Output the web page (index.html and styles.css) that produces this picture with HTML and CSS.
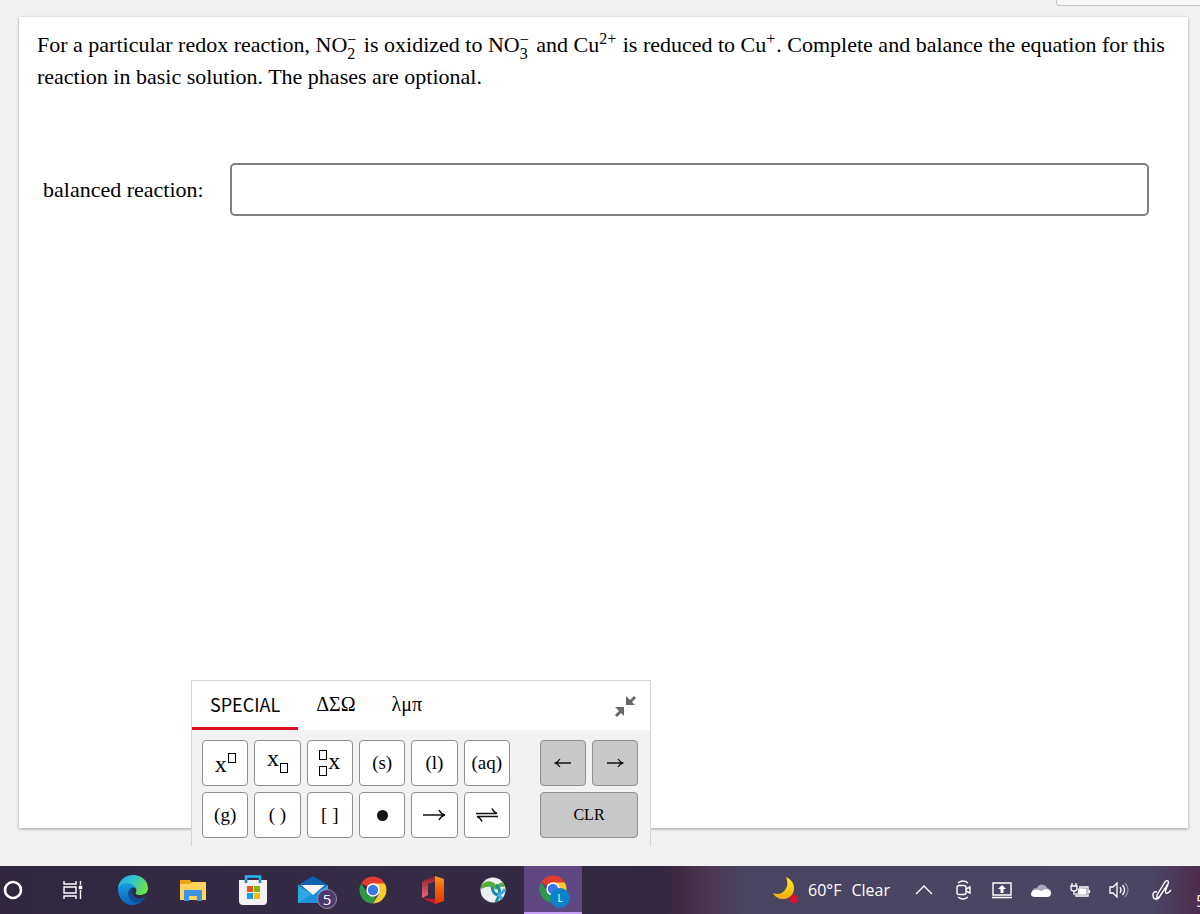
FILE: index.html
```html
<!DOCTYPE html>
<html lang="en">
<head>
<meta charset="utf-8">
<title>Balanced reaction</title>
<meta name="viewport" content="width=device-width, initial-scale=1">
<link rel="stylesheet" href="styles.css">
</head>
<body>
<header class="topbar"><div class="topbar-panel"></div></header>

<main class="card">
  <p class="question">For a particular redox reaction, <span class="ion">NO<span class="stack"><sup>−</sup><sub>2</sub></span></span> is oxidized to <span class="ion">NO<span class="stack"><sup>−</sup><sub>3</sub></span></span> and <span class="ion">Cu<sup class="charge">2+</sup></span> is reduced to <span class="ion">Cu<sup class="charge">+</sup></span>. Complete and balance the equation for this reaction in basic solution. The phases are optional.</p>
  <div class="answer">
    <label for="reaction">balanced reaction:</label>
    <input id="reaction" class="answer-input" type="text">
  </div>

  <section class="keypad" aria-label="Symbol keypad">
    <div class="tabs">
      <button class="tab tab-special active" type="button">SPECIAL</button>
      <button class="tab" type="button">ΔΣΩ</button>
      <button class="tab" type="button">λμπ</button>
      <button class="collapse" type="button" aria-label="Collapse">
        <svg width="24" height="24" viewBox="0 0 24 24" fill="#666"><path d="M13 2v9h9l-3-3 4-4-2-2-4 4z"/><path d="M2 13h9v9l-3-3-4 4-2-2 4-4z"/></svg>
      </button>
    </div>
    <div class="keys">
      <div class="symbols">
        <button class="key" type="button" aria-label="Superscript"><span class="x low">x</span><i class="slot high"></i></button>
        <button class="key" type="button" aria-label="Subscript"><span class="x up">x</span><i class="slot down"></i></button>
        <button class="key" type="button" aria-label="Isotope"><span class="slots"><i class="slot"></i><i class="slot"></i></span><span class="x mid">x</span></button>
        <button class="key" type="button">(s)</button>
        <button class="key" type="button">(l)</button>
        <button class="key" type="button">(aq)</button>
        <button class="key" type="button">(g)</button>
        <button class="key" type="button">( )</button>
        <button class="key" type="button">[ ]</button>
        <button class="key" type="button" aria-label="Dot"><i class="dot"></i></button>
        <button class="key" type="button" aria-label="Yields"><svg width="24" height="14" viewBox="0 0 24 14" fill="none" stroke="#111" stroke-width="1.5"><path d="M1 7h21M17 2q2 4 6 5q-4 1-6 5"/></svg></button>
        <button class="key" type="button" aria-label="Equilibrium"><svg width="24" height="16" viewBox="0 0 24 16" fill="none" stroke="#111" stroke-width="1.6"><path d="M1 6.500h21q-3-1-5-5M23 9.500H2q3 1 5 5"/></svg></button>
      </div>
      <div class="controls">
        <button class="key gray" type="button" aria-label="Left"><svg width="18" height="12" viewBox="0 0 18 12" fill="none" stroke="#111" stroke-width="1.3"><path d="M17 6H2M6 2Q4 5 1 6q3 1 5 4"/></svg></button>
        <button class="key gray" type="button" aria-label="Right"><svg width="18" height="12" viewBox="0 0 18 12" fill="none" stroke="#111" stroke-width="1.3"><path d="M1 6h15M12 2q2 3 5 4q-3 1-5 4"/></svg></button>
        <button class="key gray wide" type="button">CLR</button>
      </div>
    </div>
  </section>
</main>

<footer class="taskbar">
  <nav class="apps">
    <button class="app" type="button" aria-label="Cortana"><svg width="22" height="22" viewBox="0 0 22 22"><circle cx="11" cy="11" r="8" fill="none" stroke="#fff" stroke-width="2.6"/></svg></button>
    <button class="app" type="button" aria-label="Task view"><svg width="22" height="22" viewBox="0 0 22 22" fill="none" stroke="#fff" stroke-width="1.4"><path d="M2 2v3h12V2M2 20v-3h12v3M2 8h12v6H2zM18.500 2v4M18.500 11v9"/><rect x="17.500" y="7.500" width="2" height="2" fill="#fff"/></svg></button>
    <button class="app" type="button" aria-label="Edge">
      <svg width="30" height="30" viewBox="0 0 30 30"><defs><linearGradient id="e1" x1="0" y1="0" x2="1" y2=".4"><stop offset="0" stop-color="#24a4dc"/><stop offset=".5" stop-color="#2fc3d0"/><stop offset="1" stop-color="#6be04c"/></linearGradient><linearGradient id="e2" x1="0" y1="0" x2="0" y2="1"><stop offset="0" stop-color="#199be0"/><stop offset="1" stop-color="#0b62b8"/></linearGradient></defs><path d="M0 14C0 6 7 0 15 0c9 0 15 6 15 13 0 5-4 7-8 7-4 0-5-1-4-3 1-1 1-5-4-6C8 10 3 11 0 14z" fill="url(#e1)"/><path d="M0 14C2 9 8 7 13 9c3 1 5 3 5 5-3-3-7-1-7 4 0 6 7 10 14 7-3 4-7 5-11 5C6 30 0 23 0 14z" fill="url(#e2)"/><path d="M11 15c-3 6 2 15 11 12 2-1 5-3 6-6-4 3-10 3-13-1-1-2-1-4 0-6-1-1-3 0-4 1z" fill="#114c91"/></svg>
    </button>
    <button class="app" type="button" aria-label="File Explorer"><svg width="28" height="24" viewBox="0 0 28 24"><path d="M1 2h10l2 3h14v17H1z" fill="#e8a317"/><path d="M1 6h10l2-2h14v18H1z" fill="#ffd35c"/><path d="M5 12h18v11h-5v-5h-8v5H5z" fill="#3b95e3"/></svg></button>
    <button class="app" type="button" aria-label="Microsoft Store"><svg width="30" height="32" viewBox="0 0 30 32"><path d="M8 9V2.500h14V9" fill="none" stroke="#29b6ee" stroke-width="2.500"/><path d="M1 6h28v21q0 4-4 4H5q-4 0-4-4z" fill="#f3f1f4"/><path d="M8 6v3M22 6v3" stroke="#1686c8" stroke-width="2.500"/><path d="M9 12h6v6H9z" fill="#f25022"/><path d="M16 12h6v6h-6z" fill="#7fba00"/><path d="M9 19h6v6H9z" fill="#00a4ef"/><path d="M16 19h6v6h-6z" fill="#ffb900"/></svg></button>
    <button class="app" type="button" aria-label="Mail, 5 unread"><svg width="32" height="30" viewBox="0 0 32 30"><path d="M1 10L16 1l15 9v17H1z" fill="#0e62b0"/><path d="M1 10l15 10 15-10v18H1z" fill="#2ca7e8"/><path d="M1 28l18-11 12 11z" fill="#1d8fd8"/><path d="M4 10h24l-12 10z" fill="#f7f5f8"/></svg><span class="badge">5</span></button>
    <button class="app" type="button" aria-label="Chrome"><svg width="28" height="28" viewBox="0 0 28 28"><path d="M14 14L2.300 7.250A13.500 13.500 0 0 1 25.700 7.250z" fill="#e33b2e"/><path d="M14 7.500h11.800A13.500 13.500 0 0 1 14 27.500l6-10z" fill="#fcc934"/><path d="M2.300 7.250L8.300 17.500 14 20.500l3 .500-3 6.500A13.500 13.500 0 0 1 2.300 7.250z" fill="#2c9b48"/><circle cx="14" cy="14" r="6.700" fill="#fff"/><circle cx="14" cy="14" r="5.200" fill="#3b78e7"/></svg></button>
    <button class="app" type="button" aria-label="Office"><svg width="26" height="30" viewBox="0 0 26 30"><defs><linearGradient id="o1" x1="0" y1="0" x2="0" y2="1"><stop offset="0" stop-color="#ff9a1f"/><stop offset=".5" stop-color="#f25c05"/><stop offset="1" stop-color="#e23b00"/></linearGradient><linearGradient id="o2" x1="0" y1="0" x2="0" y2="1"><stop offset="0" stop-color="#8e1b2b"/><stop offset="1" stop-color="#ef6a78"/></linearGradient></defs><path d="M15 1L3 6q-1 1-1 2v15l6-3V9l7-2z" fill="url(#o2)"/><path d="M2 23l13 1V7l9-2v20l-9 4z" fill="#c3192c"/><path d="M15 1l9 3v22l-9 3z" fill="url(#o1)"/><path d="M8 9l7-2v17l-7-2z" fill="#352b45"/></svg></button>
    <button class="app" type="button" aria-label="Secure Client"><svg width="28" height="28" viewBox="0 0 28 28"><circle cx="14" cy="14" r="12.500" fill="#eceef0"/><path d="M2 10C6 4 13 4 17 9l7-3 2 5c-4-1-6 0-9 3-4-4-9-4-15-1z" fill="#55ac3b"/><path d="M13 11q1 8 7 8M17 9q5 4 3 10-1 4-3 7" fill="none" stroke="#1a8fa3" stroke-width="3"/><path d="M20 18q4-1 6-5M19 18l4 5" fill="none" stroke="#45a9e8" stroke-width="3"/></svg></button>
    <button class="app current" type="button" aria-label="Chrome, profile L"><svg width="28" height="28" viewBox="0 0 28 28"><path d="M14 14L2.300 7.250A13.500 13.500 0 0 1 25.700 7.250z" fill="#e33b2e"/><path d="M14 7.500h11.800A13.500 13.500 0 0 1 14 27.500l6-10z" fill="#fcc934"/><path d="M2.300 7.250L8.300 17.500 14 20.500l3 .500-3 6.500A13.500 13.500 0 0 1 2.300 7.250z" fill="#2c9b48"/><circle cx="14" cy="14" r="6.700" fill="#fff"/><circle cx="14" cy="14" r="5.200" fill="#3b78e7"/></svg><span class="badge profile">L</span></button>
  </nav>
  <div class="tray">
    <button class="weather" type="button"><svg width="26" height="28" viewBox="0 0 26 28"><defs><linearGradient id="m" x1="0" y1="0" x2="0" y2="1"><stop offset="0" stop-color="#ffef20"/><stop offset="1" stop-color="#f3a90c"/></linearGradient></defs><path d="M14 1c7 3 10 10 7 16-4 8-16 8-20 0 5 2 9 1 12-3 3-4 3-8 1-13z" fill="url(#m)"/><circle cx="22" cy="23" r="4" fill="#e0102f"/></svg><span>60°F</span><span>Clear</span></button>
    <button class="status" type="button" aria-label="Hidden icons"><svg width="18" height="12" viewBox="0 0 18 12" fill="none" stroke="#fff" stroke-width="1.4"><path d="M1 10l8-8 8 8"/></svg></button>
    <button class="status" type="button" aria-label="Meet now"><svg width="18" height="22" viewBox="0 0 18 22" fill="none" stroke="#fff" stroke-width="1.4"><path d="M4 4q5-4 10 0M4 18q5 4 10 0M12 10l4-2v6l-4-2"/><rect x="3" y="6.500" width="9" height="9" rx="2"/></svg></button>
    <button class="status" type="button" aria-label="Project"><svg width="20" height="18" viewBox="0 0 20 18" fill="none" stroke="#fff" stroke-width="1.4"><path d="M1 2h18v12H1zM0 16.500h20"/><path d="M10 4l4 4h-2.500v4h-3V8H6z" fill="#fff" stroke="none"/></svg></button>
    <button class="status" type="button" aria-label="OneDrive"><svg width="22" height="16" viewBox="0 0 22 16"><path d="M2 10q0-4 5-4 2-5 7-3 3 1 3 3 4 1 4 4z" fill="#aaa6b7"/><path d="M5 15q-4 0-4-3t4-4q3-1 6 1l5-2q5 1 5 4 0 4-4 4z" fill="#fff"/></svg></button>
    <button class="status" type="button" aria-label="Battery"><svg width="22" height="18" viewBox="0 0 22 18" fill="none" stroke="#fff" stroke-width="1.3"><path d="M3 2v3M7 2v3M2 5h6v3q0 2-3 2t-3-2zM5 10v4M10 6h9v9H7V12M20.500 9v3"/><path d="M10 8h7v5H9z" fill="#fff"/></svg></button>
    <button class="status" type="button" aria-label="Volume"><svg width="22" height="18" viewBox="0 0 22 18" fill="none" stroke="#fff" stroke-width="1.3"><path d="M2 6h3l4-4v14l-4-4H2zM12 6q2 3 0 6M14.500 4q4 5 0 10"/><path d="M17 2q6 7 0 14" stroke="#918da4"/></svg></button>
    <button class="status pen" type="button" aria-label="Pen"><svg width="22" height="22" viewBox="0 0 22 22" fill="none" stroke="#fff" stroke-width="1.4"><path d="M6 13q-4-1-4 3t3 4q3 0 4-3M6 16L14 3q2-2 3-1t0 3L9 17l-3 3zM17 6q-4 7-2 8t5-3"/></svg></button>
    <span class="clock">5</span>
  </div>
</footer>
</body>
</html>
```
FILE: styles.css
```css
* { box-sizing: border-box; }
body {
  margin: 0;
  min-height: 100vh;
  display: flex;
  flex-direction: column;
  background: #f2f2f2;
  color: #000;
  font-family: "Liberation Serif", serif;
  font-size: 22px;
  overflow-x: hidden;
}
button { margin: 0; padding: 0; border: 0; background: none; color: inherit; font: inherit; }
svg { display: block; }

.topbar { height: 17px; display: flex; justify-content: flex-end; align-items: flex-start; }
.topbar-panel {
  width: 12%;
  height: 6px;
  border: 1px solid #c4c4c4;
  border-width: 0 0 1px 1px;
  border-radius: 0 0 0 4px;
  background: #f8f8f8;
}

.card {
  position: relative;
  flex: 1;
  margin: 0 12px 38px 19px;
  padding: 12px 18px 0;
  background: #fff;
  box-shadow: 0 1px 3px rgba(0, 0, 0, .35);
}
.question { margin: 0; line-height: 32px; }
.ion { white-space: nowrap; }
.stack {
  display: inline-flex;
  flex-direction: column;
  margin-right: 2px;
  vertical-align: middle;
  font-size: 16px;
  line-height: 14px;
}
.stack sup, .stack sub { font-size: inherit; vertical-align: baseline; }
.charge { margin-right: 1px; font-size: 16px; line-height: 0; }

.answer {
  display: flex;
  align-items: center;
  gap: 26px;
  margin-top: 70px;
  padding: 0 21px 0 6px;
}
.answer-input {
  flex: 1;
  min-width: 0;
  height: 53px;
  padding: 0 12px;
  border: 2px solid #808080;
  border-radius: 5px;
  background: #fff;
  font: inherit;
}

.keypad {
  position: absolute;
  left: 172px;
  bottom: -18px;
  width: 460px;
  border: 1px solid #d6d6d6;
  border-bottom: 0;
  background: #f2f2f2;
}
.tabs { display: flex; height: 49px; background: #fff; font-size: 20px; }
.tab { padding: 0 18px; border-bottom: 3px solid transparent; }
.tab-special { font-family: "Noto Sans CJK SC", sans-serif; font-size: 18px; }
.tab.active { border-color: #d9101e; }
.collapse { margin: 0 13px 0 auto; }
.keys { display: flex; justify-content: space-between; padding: 10px 12px 8px 10px; }
.symbols, .controls { display: grid; gap: 6px; }
.symbols { grid-template-columns: repeat(6, 1fr); width: 308px; }
.controls { grid-template-columns: repeat(2, 1fr); width: 98px; }
.key {
  display: flex;
  align-items: center;
  justify-content: center;
  height: 46px;
  border: 1px solid #8f8f8f;
  border-radius: 4px;
  background: #fff;
  font-size: 19px;
}
.gray { background: #c8c8c8; font-size: 16px; }
.wide { grid-column: span 2; }
.x { font-size: 24px; line-height: 24px; }
.low { padding-top: 2px; }
.mid { padding-bottom: 4px; }
.up { padding-bottom: 10px; }
.slot { display: block; width: 8px; height: 10px; border: 1px solid #000; }
.high { margin: 0 0 10px 1px; }
.down { margin: 10px 0 0 1px; }
.slots { display: grid; gap: 6px; margin-right: 1px; }
.dot { width: 11px; height: 11px; border-radius: 50%; background: #111; }

.taskbar {
  display: flex;
  justify-content: space-between;
  height: 48px;
  overflow: hidden;
  background: linear-gradient(90deg, #30273f 0%, #352b45 30%, #32283f 55%, #402c44 57%, #4b3650 59%, #494460 62%, #4a4562 96%, #4d2c4c 100%);
  color: #fff;
  font-family: "Open Sans", "Noto Sans", sans-serif;
}
.apps { display: flex; gap: 2px; margin-left: -16px; }
.app { position: relative; width: 58px; display: flex; align-items: center; justify-content: center; }
.current { background: #5f4882; border-bottom: 2px solid #c3a0f5; }
.badge {
  position: absolute;
  right: 5px;
  bottom: 5px;
  width: 20px;
  height: 20px;
  border: 1px solid #9d8fb5;
  border-radius: 50%;
  background: #4b3a70;
  font-size: 15px;
  line-height: 18px;
  text-align: center;
}
.profile { right: 12px; bottom: 4px; border-color: #0b83c9; background: #0b83c9; font-size: 10px; }
.tray { display: flex; align-items: center; font-size: 16px; }
.weather { display: flex; align-items: center; gap: 10px; margin-right: 14px; }
.status { width: 39px; display: flex; justify-content: center; }
.pen { width: 48px; }
.clock { width: 4px; margin: 22px 0 0 10px; white-space: nowrap; }
```
